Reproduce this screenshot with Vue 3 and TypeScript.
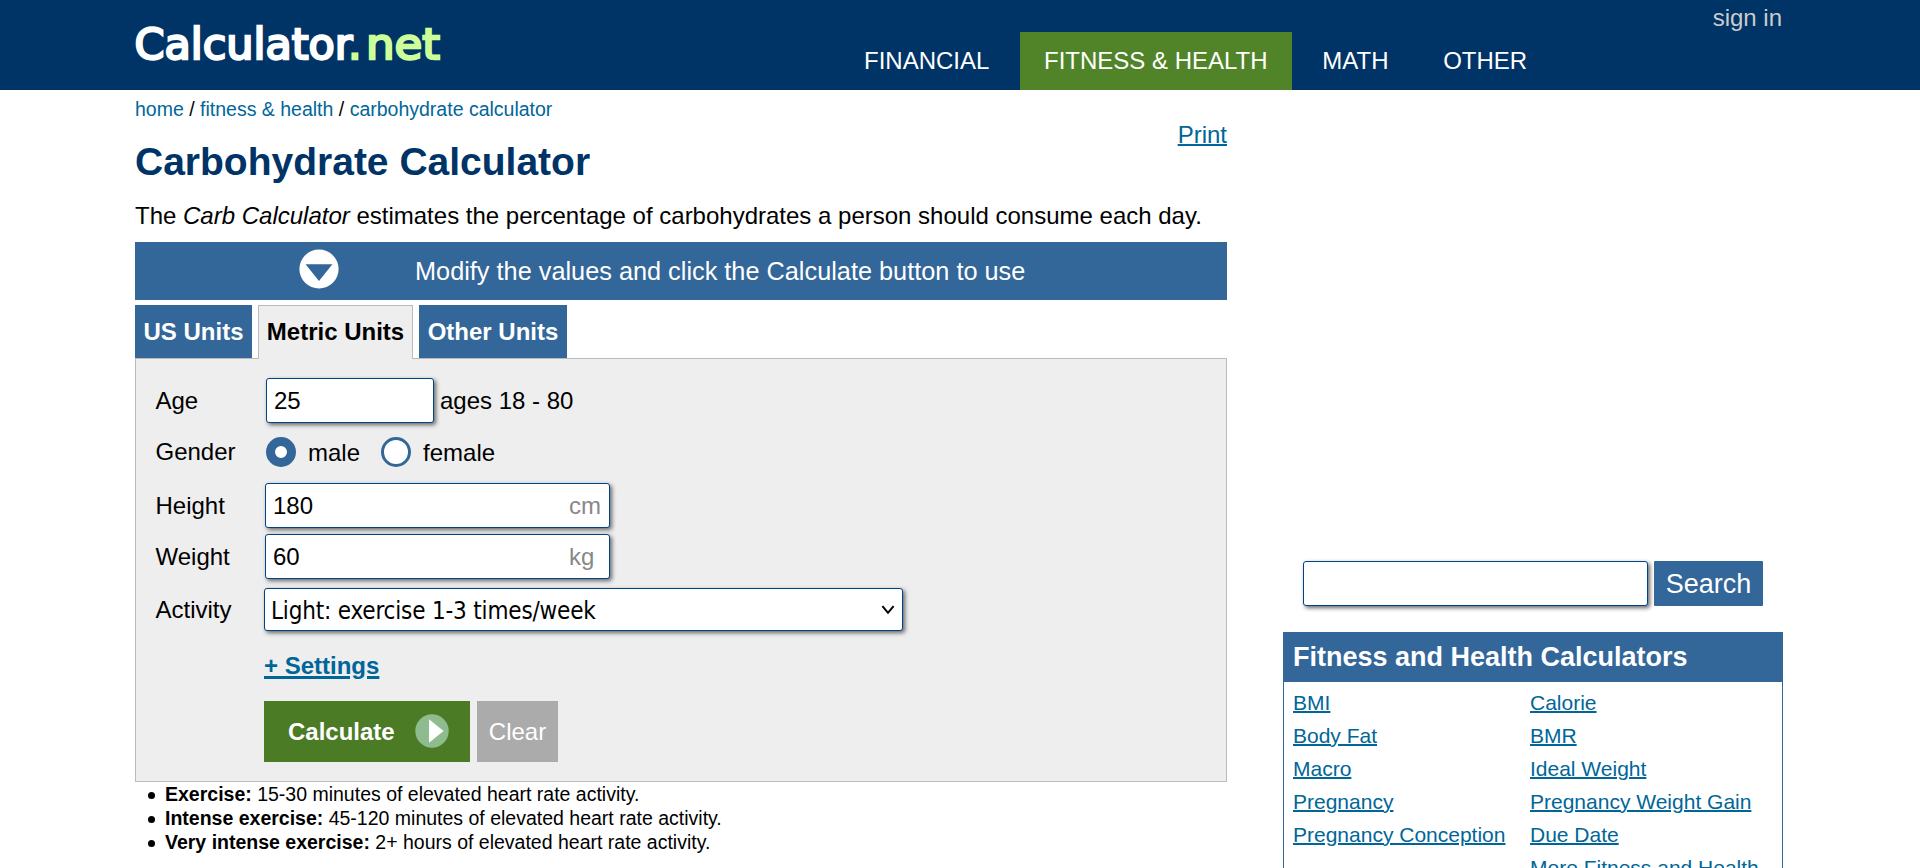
<script setup lang="ts">
import { ref } from 'vue'

interface NavItem { label: string; active?: boolean }

const nav: NavItem[] = [
  { label: 'FINANCIAL' },
  { label: 'FITNESS & HEALTH', active: true },
  { label: 'MATH' },
  { label: 'OTHER' },
]
const tabs = ['US Units', 'Metric Units', 'Other Units']
const activeTab = ref('Metric Units')
const age = ref('25')
const gender = ref<'male' | 'female'>('male')
const height = ref('180')
const weight = ref('60')
const query = ref('')

const notes = [
  { term: 'Exercise:', text: '15-30 minutes of elevated heart rate activity.' },
  { term: 'Intense exercise:', text: '45-120 minutes of elevated heart rate activity.' },
  { term: 'Very intense exercise:', text: '2+ hours of elevated heart rate activity.' },
]
const linksLeft = ['BMI', 'Body Fat', 'Macro', 'Pregnancy', 'Pregnancy Conception']
const linksRight = ['Calorie', 'BMR', 'Ideal Weight', 'Pregnancy Weight Gain', 'Due Date', 'More Fitness and Health Calculators']

function clearForm() {
  age.value = ''
  height.value = ''
  weight.value = ''
}
</script>

<template>
  <div class="page">
    <header class="top">
      <div class="wrap top-row">
        <svg class="logo" width="310" height="50" viewBox="0 0 310 50" role="img" aria-label="Calculator.net">
          <text class="logo-a" x="-0.5" y="39" textLength="218" lengthAdjust="spacingAndGlyphs">Calculator</text>
          <text class="logo-b" x="213" y="39">.</text>
          <text class="logo-b" x="231" y="39" textLength="74" lengthAdjust="spacingAndGlyphs">net</text>
        </svg>
        <nav class="nav">
          <a v-for="n in nav" :key="n.label" class="nav-item" :class="{ active: n.active }">{{ n.label }}</a>
        </nav>
        <a class="signin">sign in</a>
      </div>
    </header>

    <div class="wrap body">
      <main class="main">
        <div class="head">
          <div>
            <div class="crumbs"><a>home</a> / <a>fitness &amp; health</a> / <a>carbohydrate calculator</a></div>
            <h1>Carbohydrate Calculator</h1>
          </div>
          <a class="print">Print</a>
        </div>
        <p class="intro">The <i>Carb Calculator</i> estimates the percentage of carbohydrates a person should consume each day.</p>

        <div class="band">
          <svg width="40" height="40" viewBox="0 0 40 40">
            <circle cx="20" cy="20" r="19.6" fill="#fff" />
            <path d="M6.6 15.2H33.4L20 32Z" fill="#336699" />
          </svg>
          <span>Modify the values and click the Calculate button to use</span>
        </div>

        <div class="tabs">
          <a v-for="t in tabs" :key="t" class="tab" :class="{ on: t === activeTab }" @click="activeTab = t">{{ t }}</a>
        </div>

        <form class="panel" @submit.prevent>
          <div class="row age">
            <label>Age</label>
            <input v-model="age" class="field short" type="text" />
            <span class="hint">ages 18 - 80</span>
          </div>
          <div class="row gender">
            <label>Gender</label>
            <span class="radio" :class="{ checked: gender === 'male' }" @click="gender = 'male'"></span>
            <span class="opt">male</span>
            <span class="radio second" :class="{ checked: gender === 'female' }" @click="gender = 'female'"></span>
            <span class="opt">female</span>
          </div>
          <div class="row height">
            <label>Height</label>
            <div class="field unit"><input v-model="height" type="text" /><span>cm</span></div>
          </div>
          <div class="row weight">
            <label>Weight</label>
            <div class="field unit"><input v-model="weight" type="text" /><span>kg</span></div>
          </div>
          <div class="row activity">
            <label>Activity</label>
            <div class="field select">
              <span>Light: exercise 1-3 times/week</span>
              <svg width="14" height="12" viewBox="0 0 14 12"><path d="M1.4 2.2L7 8.8L12.6 2.2" fill="none" stroke="#000" stroke-width="2" /></svg>
            </div>
          </div>
          <a class="settings">+ Settings</a>
          <div class="actions">
            <button class="calc" type="submit">
              Calculate
              <svg width="34" height="34" viewBox="0 0 34 34">
                <circle cx="17" cy="17" r="16.7" fill="#8fbc8f" />
                <path d="M14 5.2L28.6 17L14 28.8Z" fill="#fff" />
              </svg>
            </button>
            <button class="clear" type="button" @click="clearForm">Clear</button>
          </div>
        </form>

        <ul class="notes">
          <li v-for="n in notes" :key="n.term"><b>{{ n.term }}</b> {{ n.text }}</li>
        </ul>
      </main>

      <aside class="side">
        <div class="search">
          <input v-model="query" class="field" type="text" aria-label="Search" />
          <button type="button">Search</button>
        </div>
        <section class="box">
          <h2>Fitness and Health Calculators</h2>
          <div class="cols">
            <div><p v-for="l in linksLeft" :key="l"><a>{{ l }}</a></p></div>
            <div><p v-for="l in linksRight" :key="l"><a>{{ l }}</a></p></div>
          </div>
        </section>
      </aside>
    </div>
  </div>
</template>

<style>
html, body { margin: 0; overflow: hidden; }
</style>

<style scoped>
* { box-sizing: border-box; }
.page {
  height: 868px;
  overflow: hidden;
  background: #fff;
  color: #000;
  font: 24px/28px "Liberation Sans", Arial, sans-serif;
}
.wrap { width: 1650px; margin: 0 auto; }
a { color: #006699; cursor: pointer; }
.top { height: 90px; background: #003366; }
.top-row { height: 90px; display: flex; }
.logo { margin-top: 20px; flex: none; overflow: visible; }
.logo text { font-family: "DejaVu Sans", sans-serif; font-size: 43px; stroke-width: 2.4px; }
.logo-a { fill: #fff; stroke: #fff; }
.logo-b { fill: #ccff99; stroke: #ccff99; }
.nav { display: flex; gap: 6.67px; margin: 32px 0 0 395px; }
.nav-item { color: #fff; padding: 0 24px; line-height: 57px; height: 58px; white-space: nowrap; }
.nav-item.active { background: #518428; }
.signin { color: #ccc; margin: 4px 3px 0 auto; }

.body { display: flex; justify-content: space-between; }
.main { width: 1092px; }
.head { display: flex; justify-content: space-between; height: 112px; padding-top: 7px; }
.crumbs { font-size: 19.5px; line-height: 24px; }
h1 { margin: 18px 0 0; font-size: 39px; line-height: 45px; color: #003366; }
.print { margin-top: 24px; }
.print, .settings, .cols a { text-decoration: underline; text-decoration-thickness: 2px; }
.intro { margin: 0; height: 40px; white-space: nowrap; }
.band {
  height: 58px;
  display: flex;
  background: #336699;
  color: #fff;
  font-size: 25.3px;
  line-height: 58px;
}
.band svg { margin: 7px 76px 0 164px; flex: none; }
.tabs { display: flex; gap: 6px; margin-top: 5px; height: 53px; }
.tab {
  width: 117px;
  height: 53px;
  line-height: 53px;
  text-align: center;
  font-weight: bold;
  color: #fff;
  background: #336699;
  white-space: nowrap;
}
.tab:nth-child(2) { width: 155px; }
.tab:nth-child(3) { width: 148px; }
.tab.on {
  height: 54px;
  line-height: 52px;
  position: relative;
  color: #000;
  background: #eee;
  border: 1px solid #bbb;
  border-bottom: 0;
}
.panel { height: 424px; background: #eee; border: 1px solid #bbb; padding: 19px 0 0 19.5px; }
.row { display: flex; align-items: center; }
.row label { width: 109.5px; flex: none; }
.field {
  height: 45px;
  border: 1px solid #004488;
  border-radius: 3px;
  background: #fff;
  box-shadow: 2px 2px 4px #666;
  font: 24px "Liberation Sans", Arial, sans-serif;
  color: #000;
  outline: 0;
}
.short { width: 168px; padding: 0 6px 0 7px; margin-left: 1px; }
.hint { margin-left: 6px; }
.age { height: 45px; }
.gender { height: 30px; margin-top: 14px; line-height: 30px; }
.radio {
  width: 30px;
  height: 30px;
  margin-left: 1px;
  border: 3px solid #336699;
  border-radius: 50%;
  background: #fff;
}
.radio.checked { border-width: 9px; }
.radio.second { margin-left: 21px; }
.opt { margin-left: 12px; padding-top: 2px; }
.height { margin-top: 16px; }
.weight { margin-top: 6px; }
.unit { width: 345px; display: flex; align-items: center; padding-left: 7px; }
.unit input { width: 296px; padding: 0; border: 0; outline: 0; background: none; font: inherit; color: inherit; }
.unit span { color: #888; }
.activity { margin-top: 9px; }
.activity label { width: 108.5px; }
.select {
  width: 639px;
  height: 43px;
  display: flex;
  align-items: center;
  justify-content: space-between;
  padding: 0 7px 0 6px;
  font-family: "DejaVu Sans Condensed", "DejaVu Sans", sans-serif;
  font-stretch: condensed;
  letter-spacing: -0.18px;
}
.select span { padding-top: 2px; }
.settings { display: block; width: max-content; margin: 21px 0 0 108.5px; font-weight: bold; text-decoration-thickness: 3px; }
.actions { display: flex; gap: 7px; margin: 21px 0 0 108.5px; }
button { border: 0; padding: 0; font: 24px "Liberation Sans", Arial, sans-serif; color: #fff; border-radius: 0; cursor: pointer; }
.calc { width: 206px; height: 61px; display: flex; align-items: center; gap: 20px; padding-left: 24px; font-weight: bold; background: #4b7b25; }
.calc svg { margin-bottom: 1px; }
.clear { width: 81px; height: 61px; background: #ababab; }
.notes { margin: 0; padding: 0 0 0 13px; list-style: none; font-size: 19.5px; line-height: 24px; }
.notes li { display: flex; align-items: center; white-space: pre; }
.notes li::before { content: ""; width: 7px; height: 7px; margin: 3px 10px 0 0; border-radius: 50%; background: #000; }

.side { width: 502px; padding: 471px 0 0 0; }
.search { display: flex; gap: 6px; padding-left: 20px; }
.search .field { width: 345px; }
.search button { width: 109px; height: 45px; padding-top: 1px; font-size: 27px; background: #336699; border-radius: 1px; }
.box { width: 500px; margin-top: 26px; border: 1px solid #336699; }
h2 { margin: -1px; height: 50px; padding-left: 10px; font-size: 27px; line-height: 50px; color: #fff; background: #336699; }
.cols { display: flex; padding: 5px 0 0 9px; font-size: 21px; line-height: 33px; }
.cols div { width: 237px; }
.cols p { margin: 0; }
</style>
